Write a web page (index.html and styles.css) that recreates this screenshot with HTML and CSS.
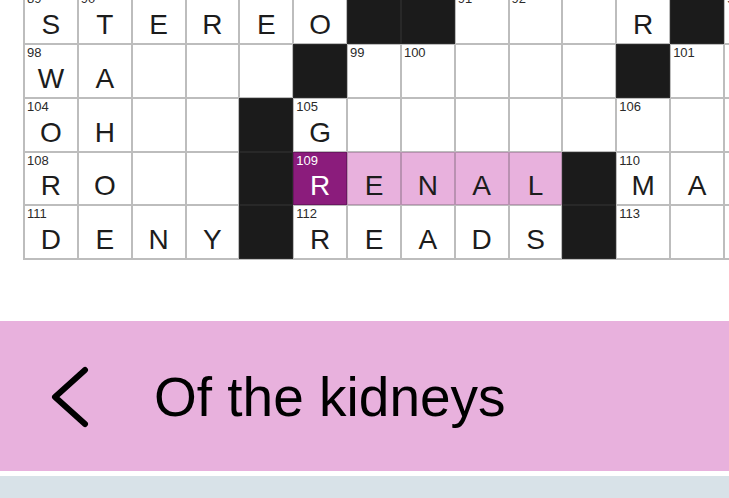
FILE: index.html
```html
<!doctype html>
<html>
<head>
<meta charset="utf-8">
<title>Crossword</title>
<link rel="stylesheet" href="styles.css">
</head>

<body>
<div class="board">
	<div class="grid" id="grid"></div>
</div>

<div class="clue-bar">
	<button class="prev-clue" aria-label="Previous clue">
		<svg width="38" height="64" viewBox="0 0 38 64">
			<polyline points="34,5 4,32 34,59" fill="none" stroke="#000" stroke-width="6" stroke-linecap="round" stroke-linejoin="round"/>
		</svg>
	</button>
	<div class="clue-text">Of the kidneys</div>
</div>

<div class="keys"></div>

<script>
	// # = black square, number:letter, '.' = empty
	var rows=[
		["89:S","90:T","E","R","E","O","#","#","91:","92:",".","R","#","93:"],
		["98:W","A",".",".",".","#","99:","100:",".",".",".","#","101:","."],
		["104:O","H",".",".","#","105:G",".",".",".",".",".","106:",".","."],
		["108:R","O",".",".","#","109:R","E","N","A","L","#","110:M","A","."],
		["111:D","E","N","Y","#","112:R","E","A","D","S","#","113:",".","."]
	];
	var word={row:3,from:5,to:9};
	var grid=document.getElementById("grid");

	for(var r=0;r<rows.length;r++){
		for(var c=0;c<rows[r].length;c++){
			var val=rows[r][c];
			var cell=document.createElement("div");
			cell.className="cell";
			if(val=="#"){
				cell.className+=" black";
				grid.appendChild(cell);
				continue;
			}
			var num="",letter=val;
			if(val.indexOf(":")>-1){
				num=val.split(":")[0];
				letter=val.split(":")[1];
			}
			if(letter==".") letter="";
			if(r==word.row && c>=word.from && c<=word.to){
				cell.className+=(c==word.from)?" current":" word";
			}
			if(num){
				var n=document.createElement("span");
				n.className="num";
				n.textContent=num;
				cell.appendChild(n);
			}
			var l=document.createElement("span");
			l.className="letter";
			l.textContent=letter;
			cell.appendChild(l);
			grid.appendChild(cell);
		}
	}
</script>
</body>
</html>
```

FILE: styles.css
```css
body{
	margin: 0;
	background: #fff;
	font-family: "Liberation Sans", Arial, sans-serif;
	overflow: hidden;
}

.board{
	height: 261px;
	overflow: hidden;
}
.grid{
	display: grid;
	grid-template-columns: repeat(14, 51.85px);
	grid-auto-rows: 51.85px;
	gap: 2px;
	padding: 2px;
	width: max-content;
	margin: -11px 0 0 23px;
	background: #bdbdbd;
}
.cell{
	position: relative;
	background: #fff;
	display: flex;
	align-items: flex-end;
	justify-content: center;
	padding-bottom: 4px;
	box-sizing: border-box;
}
.cell.black{
	background: #1b1b1b;
	box-shadow: 0 0 0 1px #282828;
}
.cell.word{
	background: #e8b1dd;
	box-shadow: 0 0 0 1px #b991b1;
}
.cell.current{
	background: #8b1c7c;
	box-shadow: 0 0 0 1px #6c1662;
	color: #fff;
	z-index: 1;
}
.num{
	position: absolute;
	top: 1px;
	left: 2px;
	font-size: 13px;
	line-height: 13px;
	color: #2a2a2a;
}
.current .num{
	color: #fff;
}
.letter{
	font-size: 28px;
	line-height: 28px;
	color: #1c1c1c;
}
.current .letter{
	color: #fff;
}

.clue-bar{
	display: flex;
	align-items: center;
	height: 150px;
	margin-top: 60px;
	background: #e8b1dd;
}
.prev-clue{
	border: none;
	background: none;
	padding: 0;
	margin: 2px 0 0 51px;
	display: flex;
}
.clue-text{
	margin-left: 65px;
	font-size: 55px;
	color: #000;
	padding-top: 2px;
}

.keys{
	height: 40px;
	margin-top: 5px;
	background: #d8e2e8;
}
```
